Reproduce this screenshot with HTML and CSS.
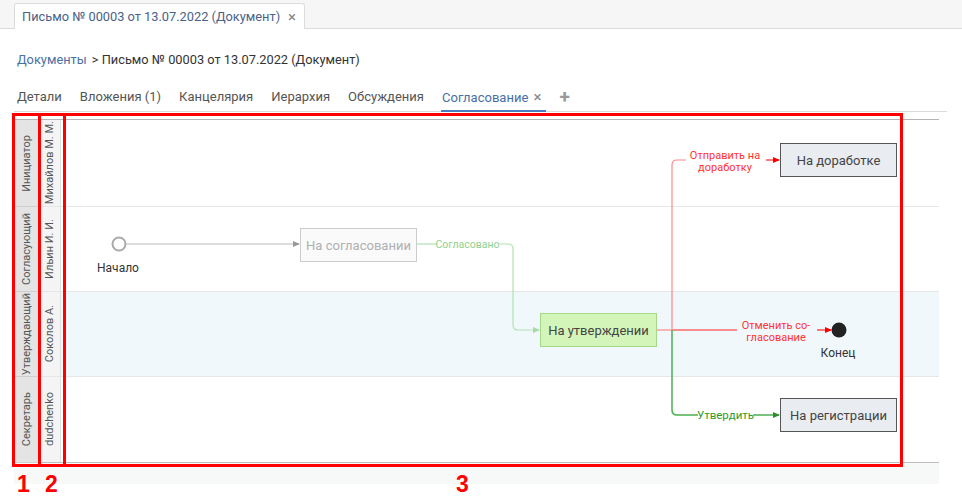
FILE: index.html
```html
<!DOCTYPE html>
<html lang="ru">
<head>
  <meta charset="UTF-8" />
  <title>Письмо № 00003 от 13.07.2022 (Документ)</title>
  <link rel="stylesheet" href="styles.css">
</head>
<body>
  <div class="topbar">
    <div class="doc-tab">
      <span>Письмо № 00003 от 13.07.2022 (Документ)</span>
      <span class="close">×</span>
    </div>
  </div>

  <div class="page">
    <div class="breadcrumb">
      <a href="#">Документы</a>
      <span class="current">&gt; Письмо № 00003 от 13.07.2022 (Документ)</span>
    </div>

    <div class="tabs">
      <span class="tab">Детали</span>
      <span class="tab">Вложения (1)</span>
      <span class="tab">Канцелярия</span>
      <span class="tab">Иерархия</span>
      <span class="tab">Обсуждения</span>
      <span class="tab active">Согласование <span class="close">×</span></span>
      <span class="tab add">+</span>
    </div>

    <div class="diagram">
      <div class="lane lane-first">
        <div class="lane-role"><span>Инициатор</span></div>
        <div class="lane-user"><span>Михайлов М. М.</span></div>
        <div class="lane-body"></div>
      </div>
      <div class="lane">
        <div class="lane-role"><span>Согласующий</span></div>
        <div class="lane-user"><span>Ильин И. И.</span></div>
        <div class="lane-body"></div>
      </div>
      <div class="lane current">
        <div class="lane-role"><span>Утверждающий</span></div>
        <div class="lane-user"><span>Соколов А.</span></div>
        <div class="lane-body"></div>
      </div>
      <div class="lane lane-last">
        <div class="lane-role"><span>Секретарь</span></div>
        <div class="lane-user"><span>dudchenko</span></div>
        <div class="lane-body"></div>
      </div>

      <svg class="flow" width="925" height="342" viewBox="14 119 925 342">
        <defs>
          <marker id="arr-grey" markerWidth="7" markerHeight="7" refX="6" refY="3.5" orient="auto" markerUnits="userSpaceOnUse">
            <path d="M0 0.5 L7 3.5 L0 6.5 Z" fill="#999" />
          </marker>
          <marker id="arr-lgreen" markerWidth="7" markerHeight="7" refX="6" refY="3.5" orient="auto" markerUnits="userSpaceOnUse">
            <path d="M0 0.5 L7 3.5 L0 6.5 Z" fill="#a9dba9" />
          </marker>
          <marker id="arr-red" markerWidth="7" markerHeight="7" refX="6" refY="3.5" orient="auto" markerUnits="userSpaceOnUse">
            <path d="M0 0.5 L7 3.5 L0 6.5 Z" fill="#f00" />
          </marker>
          <marker id="arr-green" markerWidth="7" markerHeight="7" refX="6" refY="3.5" orient="auto" markerUnits="userSpaceOnUse">
            <path d="M0 0.5 L7 3.5 L0 6.5 Z" fill="#2e8b2e" />
          </marker>
        </defs>

        <!-- start -->
        <circle cx="119" cy="243" r="6.5" fill="#fff" stroke="#aaa" stroke-width="2" />
        <text x="118" y="271" class="caption">Начало</text>
        <path d="M126 243 H299" class="edge grey" marker-end="url(#arr-grey)" />

        <!-- На согласовании -->
        <rect x="300.5" y="227.5" width="116" height="33" class="box done" />
        <text x="358.5" y="248.5" class="box-text done-text">На согласовании</text>
        <path d="M417 243 H437" class="edge lgreen" />
        <text x="467.5" y="246.5" class="edge-label lgreen-text">Согласовано</text>
        <path d="M498 243 H508 Q513 243 513 248 V324 Q513 329 518 329 H539" class="edge lgreen" marker-end="url(#arr-lgreen)" />

        <!-- На утверждении -->
        <rect x="540.5" y="312.5" width="116" height="33" class="box active-box" />
        <text x="598.5" y="333.5" class="box-text">На утверждении</text>

        <!-- отменить -->
        <path d="M657 329 H672" class="edge pink" />
        <path d="M672 329 H737" class="edge red" />
        <text x="776" y="327.5" class="edge-label red-text">Отменить со-</text>
        <text x="776" y="339.5" class="edge-label red-text">гласование</text>
        <path d="M817 329 H831" class="edge red" marker-end="url(#arr-red)" />
        <circle cx="839" cy="329" r="7.5" fill="#222" />
        <text x="838" y="355.5" class="caption">Конец</text>

        <!-- на доработку -->
        <path d="M672 329 V164 Q672 159 677 159 H686" class="edge pink" />
        <text x="725" y="157.5" class="edge-label red-text">Отправить на</text>
        <text x="725" y="169.5" class="edge-label red-text">доработку</text>
        <path d="M766 159 H779" class="edge red" marker-end="url(#arr-red)" />
        <rect x="780.5" y="142.5" width="116" height="33" class="box plain" />
        <text x="838.5" y="163.5" class="box-text">На доработке</text>

        <!-- утвердить -->
        <path d="M672 329 V409 Q672 414 677 414 H698" class="edge green" />
        <text x="725.5" y="418" class="edge-label green-text">Утвердить</text>
        <path d="M753 414 H779" class="edge green" marker-end="url(#arr-green)" />
        <rect x="780.5" y="397.5" width="116" height="33" class="box plain" />
        <text x="838.5" y="418.5" class="box-text">На регистрации</text>
      </svg>
    </div>
    <div class="hscroll"></div>
  </div>

  <!-- annotation marks -->
  <div class="mark mark-1"></div>
  <div class="mark mark-2"></div>
  <div class="mark mark-3"></div>
  <span class="mark-num num-1">1</span>
  <span class="mark-num num-2">2</span>
  <span class="mark-num num-3">3</span>
</body>
</html>
```

FILE: styles.css
```css
body {
  margin: 0;
  font-family: Roboto, 'Liberation Sans', Arial, sans-serif;
  font-size: 13px;
  color: #333;
  background: #fff;
  position: relative;
  height: 496px;
  overflow: hidden;
}
.topbar {
  height: 29px;
  box-sizing: border-box;
  background: #f6f6f6;
  border-bottom: 1px solid #dcdcdc;
  padding-left: 14px;
  display: flex;
  align-items: flex-end;
}
.doc-tab {
  height: 26px;
  box-sizing: border-box;
  margin-bottom: -1px;
  background: #fff;
  border: 1px solid #dcdcdc;
  border-bottom: none;
  border-radius: 3px 3px 0 0;
  padding: 0 8px 0 7px;
  display: flex;
  align-items: center;
  gap: 8px;
  font-size: 12.8px;
  color: #4a6287;
}
.doc-tab .close {
  color: #888;
  font-size: 15px;
}
.page {
  padding: 0 15px 0 14px;
}
.breadcrumb {
  margin: 23px 0 0 3px;
  line-height: 16px;
  font-size: 12.8px;
}
.breadcrumb a {
  color: #4a6fa5;
  text-decoration: none;
  margin-right: 2px;
}
.breadcrumb .current {
  color: #333;
}
.tabs {
  display: flex;
  gap: 18px;
  margin-top: 21px;
  padding-left: 3px;
  border-bottom: 1px solid #dcdcdc;
}
.tab {
  line-height: 16px;
  padding-bottom: 4px;
  margin-bottom: -1px;
  border-bottom: 2px solid transparent;
  color: #555;
}
.tab.active {
  color: #4a6fa5;
  border-bottom-color: #4a7cc0;
  padding: 0 4px 4px 1px;
  margin-left: -1px;
}
.tab.active .close {
  color: #888;
  font-size: 15px;
  margin-left: 2px;
}
.tab.add {
  color: #999;
  font-size: 19px;
  font-weight: bold;
  line-height: 16px;
  margin-left: -4px;
}
.diagram {
  position: relative;
  margin: 7px 8px 0 0;
  border-top: 1px solid #b5b5b5;
  border-bottom: 1px solid #bdbdbd;
}
.lane {
  display: grid;
  grid-template-columns: 25px 22px 1fr;
  height: 85px;
  box-sizing: border-box;
  border-bottom: 1px solid #e6e6e6;
}
.lane-first {
  height: 87px;
}
.lane-last {
  border-bottom: none;
}
.lane-role,
.lane-user {
  display: flex;
  align-items: center;
  justify-content: center;
  font-size: 11px;
  color: #555;
  white-space: nowrap;
}
.lane-role span,
.lane-user span {
  writing-mode: vertical-rl;
  transform: rotate(180deg);
}
.lane-role {
  background: #e4e4e4;
  border-right: 1px solid #cfcfcf;
  border-bottom: 1px solid #cfcfcf;
  margin-bottom: -1px;
}
.lane-user {
  background: #f4f4f4;
  border-right: 1px solid #dedede;
}
.lane.current .lane-body {
  background: #f0f8fc;
}
.flow {
  position: absolute;
  left: 0;
  top: 0;
  font-family: Roboto, 'Liberation Sans', Arial, sans-serif;
}
.flow .edge {
  fill: none;
  stroke-width: 1.2;
}
.flow .grey { stroke: #bbb; }
.flow .lgreen { stroke: #b3e0b3; }
.flow .pink { stroke: #f88; }
.flow .red { stroke: #f22; }
.flow .green { stroke: #4caf50; stroke-width: 1.5; }
.flow .box { stroke-width: 1; }
.flow .done { fill: #fafafa; stroke: #ccc; }
.flow .active-box { fill: #d3f5b9; stroke: #a6d889; }
.flow .plain { fill: #e9edf2; stroke: #555; }
.flow .box-text {
  font-size: 13px;
  fill: #444;
  text-anchor: middle;
}
.flow .done-text { fill: #b0b0b0; }
.flow .caption {
  font-size: 12px;
  fill: #333;
  text-anchor: middle;
}
.flow .edge-label {
  font-size: 11px;
  text-anchor: middle;
}
.flow .lgreen-text { fill: #8fd18f; font-size: 10.5px; }
.flow .red-text { fill: #f33; }
.flow .green-text { fill: #2e9a2e; font-size: 11.5px; }
.hscroll {
  height: 21px;
  margin-right: 8px;
  background: #f7f9f9;
}
.mark {
  position: absolute;
  top: 113px;
  height: 354px;
  box-sizing: border-box;
  border: 3px solid #f00;
}
.mark-1 { left: 12px; width: 29px; }
.mark-2 { left: 38px; width: 28px; }
.mark-3 { left: 38px; width: 865px; }
.mark-num {
  position: absolute;
  top: 472px;
  font-family: 'Liberation Sans', Arial, sans-serif;
  font-weight: bold;
  font-size: 23px;
  color: #f00;
  line-height: 24px;
}
.num-1 { left: 17px; }
.num-2 { left: 45px; }
.num-3 { left: 456px; }
```
